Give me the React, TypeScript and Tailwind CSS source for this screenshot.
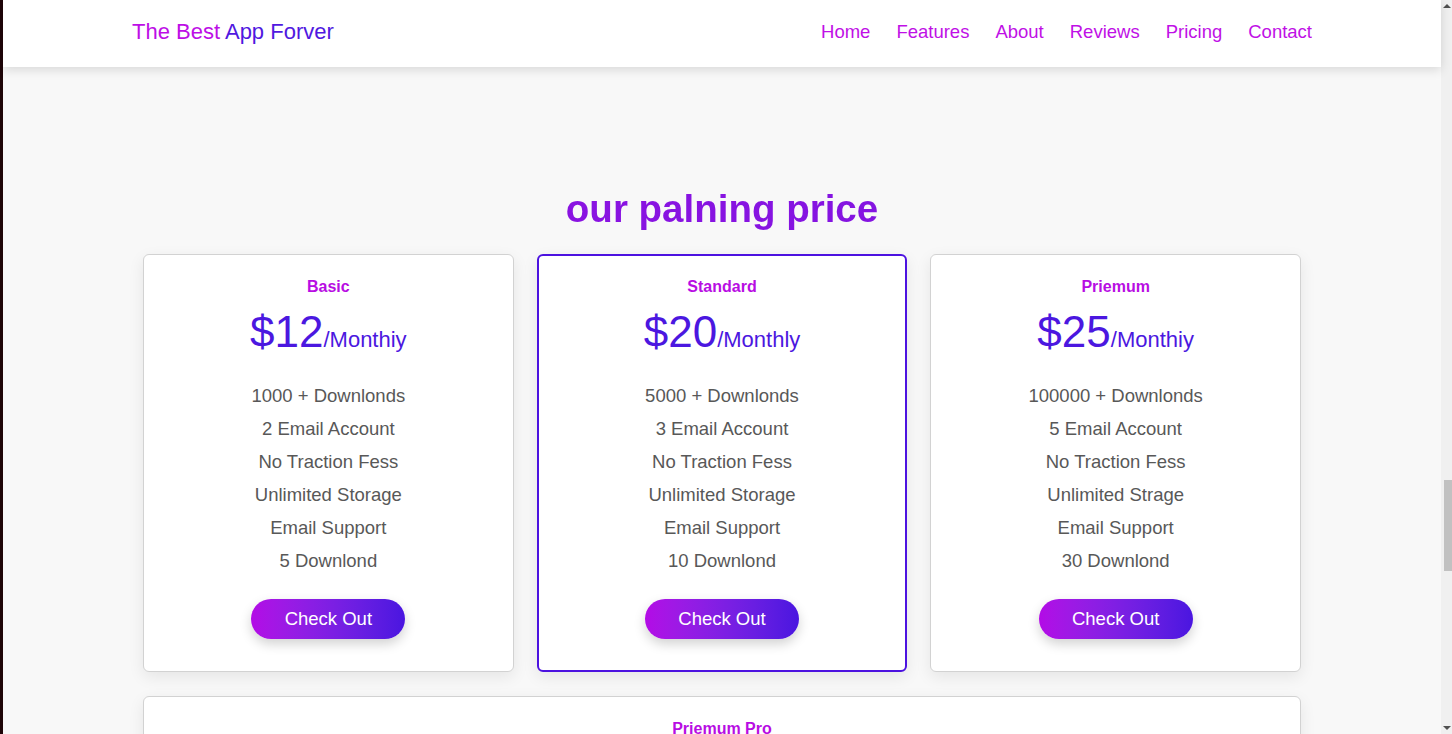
import React from "react";

type Plan = {
  name: string;
  price: string;
  period: string;
  features: string[];
  featured?: boolean;
  wide?: boolean;
};

const plans: Plan[] = [
  {
    name: "Basic",
    price: "$12",
    period: "/Monthiy",
    features: [
      "1000 + Downlonds",
      "2 Email Account",
      "No Traction Fess",
      "Unlimited Storage",
      "Email Support",
      "5 Downlond",
    ],
  },
  {
    name: "Standard",
    price: "$20",
    period: "/Monthly",
    featured: true,
    features: [
      "5000 + Downlonds",
      "3 Email Account",
      "No Traction Fess",
      "Unlimited Storage",
      "Email Support",
      "10 Downlond",
    ],
  },
  {
    name: "Priemum",
    price: "$25",
    period: "/Monthiy",
    features: [
      "100000 + Downlonds",
      "5 Email Account",
      "No Traction Fess",
      "Unlimited Strage",
      "Email Support",
      "30 Downlond",
    ],
  },
  {
    name: "Priemum Pro",
    price: "$40",
    period: "/Monthiy",
    wide: true,
    features: [
      "Unlimited Downlonds",
      "10 Email Account",
      "No Traction Fess",
      "Unlimited Storage",
      "Email Support",
      "Unlimited Downlond",
    ],
  },
];

const links = ["Home", "Features", "About", "Reviews", "Pricing", "Contact"];

function PlanCard({ plan }: { plan: Plan }) {
  return (
    <div
      className={`flex flex-col items-center rounded-[6px] bg-white pb-[31px] shadow-[0_5px_16px_rgba(0,0,0,0.08)] ${
        plan.featured
          ? "border-2 border-[#4c12e0] pt-[21px]"
          : "border border-[#d2d2d2] pt-[22px]"
      } ${plan.wide ? "col-span-3" : ""}`}
    >
      <h3 className="text-[16px] font-bold leading-[20px] text-[#b80de3]">
        {plan.name}
      </h3>
      <div className="mt-[10px] flex items-baseline leading-[50px] text-[#4b17e0]">
        <span className="text-[44px]">{plan.price}</span>
        <span className="text-[22px]">{plan.period}</span>
      </div>
      <ul className="mt-[14px] text-center text-[18.5px] leading-[33px] text-[#585858]">
        {plan.features.map((f) => (
          <li key={f}>{f}</li>
        ))}
      </ul>
      <button
        type="button"
        className="mt-[22px] h-[40px] w-[154px] rounded-full bg-linear-to-r from-[#b30ae6] to-[#4a15e0] text-[18.5px] text-white shadow-[0_5px_12px_rgba(0,0,0,0.18)]"
      >
        Check Out
      </button>
    </div>
  );
}

export default function App() {
  return (
    <div className="flex h-[734px] w-full overflow-hidden bg-[#f8f8f8] font-['Liberation_Sans',Arial,sans-serif]">
      <div className="w-[3px] shrink-0 bg-[#1e0508]" />

      <div className="flex min-w-0 flex-1 flex-col">
        <header className="relative z-10 h-[67px] shrink-0 bg-white shadow-[0_3px_10px_rgba(0,0,0,0.13)]">
          <nav className="mx-auto flex h-full w-[1180px] items-center justify-between pb-[3px]">
            <a className="text-[22px] leading-none">
              <span className="text-[#bd0ee6]">The Best </span>
              <span className="text-[#5018e0]">App Forver</span>
            </a>
            <ul className="flex gap-[26px] text-[18.5px] leading-none text-[#c010e6]">
              {links.map((l) => (
                <li key={l}>{l}</li>
              ))}
            </ul>
          </nav>
        </header>

        <main>
          <h2 className="mt-[119px] mb-[22px] bg-linear-to-r from-[#9410e2] to-[#7a14e0] bg-clip-text text-center text-[38.5px] font-bold leading-[46px] text-transparent">
            our palning price
          </h2>
          <div className="mx-auto grid w-[1158px] grid-cols-3 gap-x-[23px] gap-y-[24px]">
            {plans.map((p) => (
              <PlanCard key={p.name} plan={p} />
            ))}
          </div>
        </main>
      </div>

      <div className="flex w-[11px] shrink-0 flex-col items-center bg-[#f0f0f0]">
        <div className="mt-[4px] h-0 w-0 border-x-[4px] border-b-[4px] border-x-transparent border-b-[#505050]" />
        <div className="mt-[472px] ml-[3px] h-[91px] w-[8px] bg-[#c1c1c1]" />
        <div className="mt-auto mb-[4px] h-0 w-0 border-x-[4px] border-t-[4px] border-x-transparent border-t-[#505050]" />
      </div>
    </div>
  );
}
